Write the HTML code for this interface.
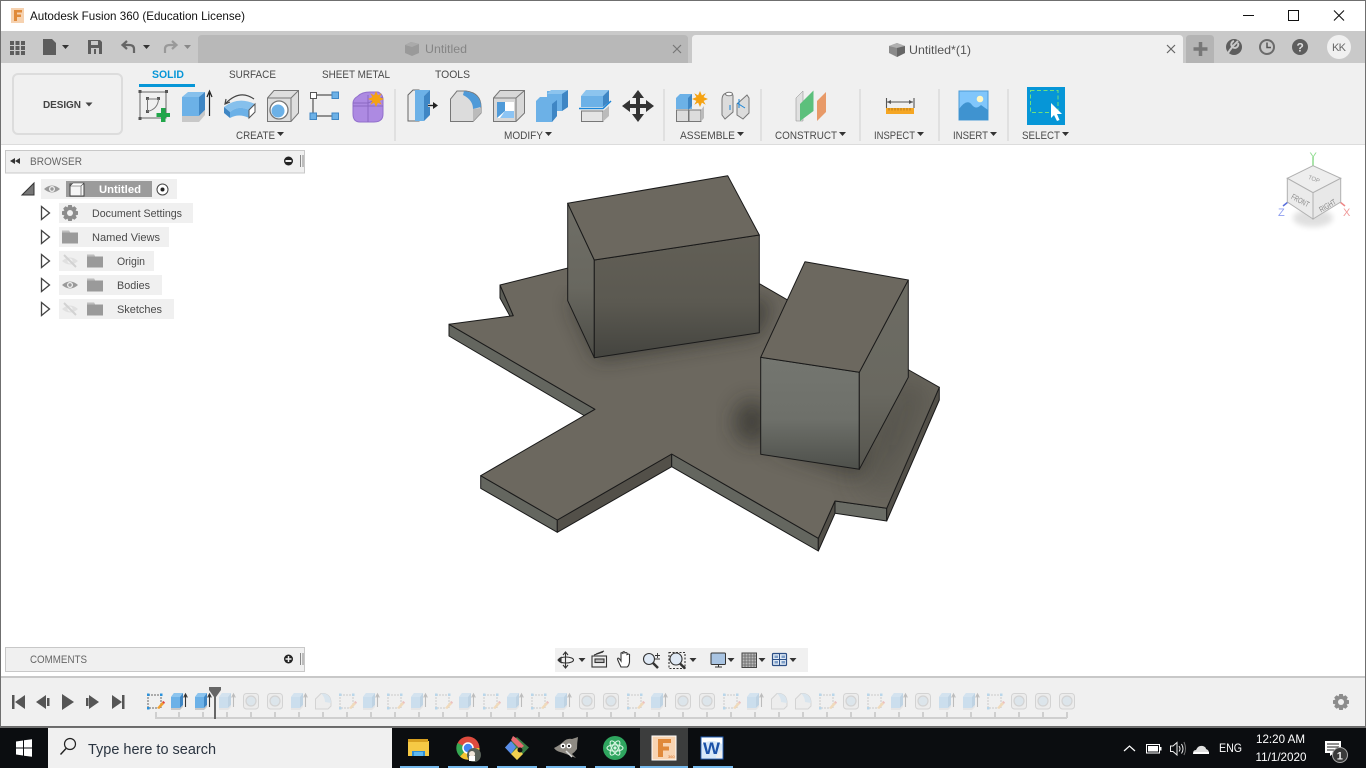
<!DOCTYPE html>
<html><head><meta charset="utf-8"><title>Autodesk Fusion 360</title>
<style>
html,body{margin:0;padding:0;width:1366px;height:768px;overflow:hidden;background:#fff}
svg{display:block;position:absolute;left:0;top:0}
text{font-family:"Liberation Sans",sans-serif;font-size:11px;fill:#4a4a4a}
</style></head><body>
<svg width="1366" height="768" viewBox="0 0 1366 768" xmlns="http://www.w3.org/2000/svg">
<defs>
<clipPath id="plateClip"><polygon points="500,285 513.3,315.7 449,324.3 595,409.3 480.7,475.7 557.3,520 671.7,454 818.3,538.3 835,501 886.7,508.3 939.3,387.3 760,284"/></clipPath>
<filter id="b10" x="-50%" y="-50%" width="200%" height="200%"><feGaussianBlur stdDeviation="10"/></filter>
<filter id="b16" x="-50%" y="-50%" width="200%" height="200%"><feGaussianBlur stdDeviation="16"/></filter>
<filter id="b3" x="-50%" y="-50%" width="200%" height="200%"><feGaussianBlur stdDeviation="3"/></filter>
<linearGradient id="g1f" x1="0" y1="0" x2="0" y2="1"><stop offset="0" stop-color="#625f56"/><stop offset=".55" stop-color="#5b5951"/><stop offset="1" stop-color="#44443f"/></linearGradient>
<linearGradient id="g1l" x1="0" y1="0" x2="0" y2="1"><stop offset="0" stop-color="#6f6e66"/><stop offset=".55" stop-color="#68675f"/><stop offset="1" stop-color="#4c4c46"/></linearGradient>
<linearGradient id="g2f" x1="0" y1="0" x2="0" y2="1"><stop offset="0" stop-color="#747670"/><stop offset=".55" stop-color="#6e706a"/><stop offset="1" stop-color="#4e504b"/></linearGradient>
<linearGradient id="g2r" x1="0" y1="0" x2="0" y2="1"><stop offset="0" stop-color="#6d6c63"/><stop offset=".6" stop-color="#696860"/><stop offset="1" stop-color="#56554e"/></linearGradient>
<g id="sk"><rect x="-7" y="695" width="13" height="13" fill="none" stroke="#666" stroke-dasharray="2 1"/><rect x="-8" y="693.5" width="2.5" height="2.5" fill="#2a92dc"/><rect x="5" y="693.5" width="2.5" height="2.5" fill="#2a92dc"/><rect x="-8" y="707" width="2.5" height="2.5" fill="#2a92dc"/><path d="M2 708 L7 702 L9 704 L4 709 Z" fill="#f0a030"/><path d="M7 702 L9 704 L10 702.5 L8.5 701 Z" fill="#e04040"/></g>
<g id="ex"><path d="M-8 697 L-5 693 H4 V705 L1 708 H-8 Z" fill="#6cb1e7"/><path d="M1 697 L4 693 V705 L1 708 Z" fill="#3f86c4"/><path d="M-8 697 L-5 693 H4 L1 697 Z" fill="#8cc4ee"/><path d="M-8 708 H1 L4 705 V707 L1 710 H-8 Z" fill="#c8c8c8"/><path d="M6.5 707 V695 M4.7 697.5 L6.5 694 L8.3 697.5" fill="none" stroke="#333" stroke-width="1.1"/></g>
<g id="ho"><rect x="-7.5" y="693.5" width="15" height="15.5" rx="3" fill="#e2e2e2" stroke="#888"/><circle cx="0" cy="701" r="5" fill="#a8c8e0" stroke="#888" stroke-width="1.2"/><path d="M-3 697 A5 5 0 0 1 4 700 A5 5 0 0 0 -3 697 Z" fill="#fff"/></g>
<g id="fi"><path d="M-7.5 709 V699 L-2 693.5 H1 Q8 695 8 703 V706 L5 709 Z" fill="#e8e8e8" stroke="#888"/><path d="M-2 693.5 H1 Q8 695 8 703 L2 702 Q2 697 -2 693.5 Z" fill="#9cc8ea"/></g>
<path id="caret" d="M0 0 H7 L3.5 4 Z" fill="#444"/>
<path id="cr2" d="M0 0 H7 L3.5 4 Z" fill="#333"/>
<g id="star"><path d="M0 -8 L1.9 -3.6 L5.7 -5.7 L3.6 -1.9 L8 0 L3.6 1.9 L5.7 5.7 L1.9 3.6 L0 8 L-1.9 3.6 L-5.7 5.7 L-3.6 1.9 L-8 0 L-3.6 -1.9 L-5.7 -5.7 L-1.9 -3.6 Z" fill="#f5a211"/></g>
<g id="folder"><path d="M0 1 H7 L8 3 H16 V14 H0 Z" fill="#9a9a9a"/><path d="M0 1 H7 L8 3 H0 Z" fill="#bdbdbd"/></g>
<g id="eye"><path d="M-8 0 Q0 -7 8 0 Q0 7 -8 0 Z" fill="#9a9a9a"/><circle cx="0" cy="0" r="3" fill="#f0f0f0"/><circle cx="0" cy="0" r="1.7" fill="#9a9a9a"/></g>
<g id="eyeoff"><path d="M-8 0 Q0 -7 8 0 Q0 7 -8 0 Z" fill="#e0e0e0"/><circle cx="0" cy="0" r="2.5" fill="#f0f0f0"/><path d="M-6 -6 L6 6" stroke="#d2d2d2" stroke-width="2"/></g>
<path id="tri" d="M0 -6.5 L8 0 L0 6.5 Z" fill="#fff" stroke="#444" stroke-width="1.3"/>
<g id="gear" fill="#8c8c8c"><path d="M-1.8 -8 H1.8 L2.4 -5.6 L4.5 -6.8 L6.8 -4.5 L5.6 -2.4 L8 -1.8 V1.8 L5.6 2.4 L6.8 4.5 L4.5 6.8 L2.4 5.6 L1.8 8 H-1.8 L-2.4 5.6 L-4.5 6.8 L-6.8 4.5 L-5.6 2.4 L-8 1.8 V-1.8 L-5.6 -2.4 L-6.8 -4.5 L-4.5 -6.8 L-2.4 -5.6 Z"/></g>
</defs>

<!-- window -->
<rect x="0" y="0" width="1366" height="768" fill="#fff"/>
<rect x="0" y="31" width="1366" height="32" fill="#c9c9c9"/>
<path d="M198 63 V39 Q198 35 202 35 H684 Q688 35 688 39 V63 Z" fill="#b8b8b8"/>
<path d="M692 63 V39 Q692 35 696 35 H1179 Q1183 35 1183 39 V63 Z" fill="#f0f0f0"/>
<path d="M1186 63 V39 Q1186 35 1190 35 H1210 Q1214 35 1214 39 V63 Z" fill="#b4b4b4"/>
<rect x="0" y="63" width="1366" height="81" fill="#f0f0f0"/>
<rect x="0" y="144" width="1366" height="1" fill="#dcdcdc"/>

<!-- title bar -->
<rect x="11" y="8" width="13" height="15" fill="#f6d2b0"/>
<path d="M14 10 H22 V12.5 H17 V14.500 H21 V17 H17 V21 H14 Z" fill="#e08a3a"/>
<text x="30" y="20" style="font-size:12px;fill:#111" textLength="215" lengthAdjust="spacingAndGlyphs">Autodesk Fusion 360 (Education License)</text>
<rect x="1243" y="15" width="11" height="1" fill="#111"/>
<rect x="1288.5" y="10.5" width="10" height="10" fill="none" stroke="#111"/>
<path d="M1334 10.5 L1344 20.5 M1344 10.5 L1334 20.5" stroke="#111" stroke-width="1.1"/>

<!-- quick access toolbar -->
<g fill="#5d5d5d">
<rect x="10" y="41" width="4" height="4"/><rect x="15.500" y="41" width="4" height="4"/><rect x="21" y="41" width="4" height="4"/>
<rect x="10" y="46" width="4" height="4"/><rect x="15.500" y="46" width="4" height="4"/><rect x="21" y="46" width="4" height="4"/>
<rect x="10" y="51" width="4" height="4"/><rect x="15.500" y="51" width="4" height="4"/><rect x="21" y="51" width="4" height="4"/>
<path d="M43 39 H52 L56 43 V55 H43 Z"/>
<path d="M88 40 H100 L102 42 V54 H88 Z"/>
</g>
<rect x="91" y="41" width="7" height="4" fill="#c9c9c9"/><rect x="91" y="48" width="8" height="6" fill="#c9c9c9"/><rect x="94" y="49" width="2" height="5" fill="#5d5d5d"/>
<use href="#cr2" x="62" y="45"/>
<path d="M134 53 V49 Q134 45 129 45 H123 M127 41 L122.500 45 L127 49" fill="none" stroke="#666" stroke-width="2.2"/>
<use href="#cr2" x="143" y="45"/>
<path d="M165 53 V49 Q165 45 170 45 H176 M172 41 L176.500 45 L172 49" fill="none" stroke="#999" stroke-width="2.2"/>
<path d="M184 45 H191 L187.500 49 Z" fill="#888"/>

<!-- tabs -->
<path d="M405 45 L411 42 L419 44 V53 L412 56 L405 53 Z" fill="#9a9a9a"/><path d="M405 45 L412 47 L419 44 L411 42 Z" fill="#aaa"/>
<text x="425" y="53" style="font-size:12px;fill:#858585" textLength="42" lengthAdjust="spacingAndGlyphs">Untitled</text>
<path d="M673 45 L681 53 M681 45 L673 53" stroke="#777" stroke-width="1.200"/>
<path d="M889 46 L897 43 L905 46 V53 L897 57 L889 53 Z" fill="#8a8a8a"/><path d="M889 46 L897 48 L905 46 L897 43 Z" fill="#b0b0b0"/><path d="M897 48 L905 46 V53 L897 57 Z" fill="#666"/>
<text x="909" y="54" style="font-size:12px;fill:#555" textLength="62" lengthAdjust="spacingAndGlyphs">Untitled*(1)</text>
<path d="M1167 45 L1175 53 M1175 45 L1167 53" stroke="#666" stroke-width="1.200"/>
<path d="M1200.500 42 V56 M1193.500 49 H1207.500" stroke="#777" stroke-width="3.500"/>

<!-- right icons -->
<circle cx="1234" cy="47" r="8" fill="#5d5d5d"/><path d="M1238 41 L1233 46 L1230 50 L1228 53 M1238 43 a3.500 3.500 0 1 1 -4 -2" fill="none" stroke="#c9c9c9" stroke-width="2"/>
<circle cx="1267" cy="47" r="8" fill="#6a6a6a"/><circle cx="1267" cy="47" r="6" fill="#c9c9c9"/><path d="M1267 42.500 V47.500 H1271" fill="none" stroke="#555" stroke-width="1.500"/>
<circle cx="1300" cy="47" r="8" fill="#5d5d5d"/><text x="1296.500" y="51.500" style="font-size:12px;font-weight:bold;fill:#ddd">?</text>
<circle cx="1339" cy="47" r="12" fill="#f0f0f0"/><text x="1332" y="51" style="font-size:11px;fill:#666" textLength="14">KK</text>

<!-- design button -->
<rect x="13" y="74" width="109" height="60" rx="5" fill="#f0f0f0" stroke="#dcdcdc" stroke-width="2"/>
<text x="43" y="108" style="font-size:10px;font-weight:bold;fill:#444" textLength="38">DESIGN</text>
<use href="#caret" x="85.500" y="102.500"/>

<!-- ribbon tabs -->
<text x="152" y="78" style="font-size:11px;font-weight:bold;fill:#0696d7" textLength="32" lengthAdjust="spacingAndGlyphs">SOLID</text>
<rect x="139" y="84" width="56" height="3" fill="#0696d7"/>
<text x="229" y="78" textLength="47" lengthAdjust="spacingAndGlyphs">SURFACE</text>
<text x="322" y="78" textLength="68" lengthAdjust="spacingAndGlyphs">SHEET METAL</text>
<text x="435" y="78" textLength="35" lengthAdjust="spacingAndGlyphs">TOOLS</text>

<!-- ribbon labels -->
<text x="236" y="139" textLength="39" lengthAdjust="spacingAndGlyphs">CREATE</text><use href="#cr2" x="277" y="132"/>
<text x="504" y="139" textLength="39" lengthAdjust="spacingAndGlyphs">MODIFY</text><use href="#cr2" x="545" y="132"/>
<text x="680" y="139" textLength="55" lengthAdjust="spacingAndGlyphs">ASSEMBLE</text><use href="#cr2" x="737" y="132"/>
<text x="775" y="139" textLength="62" lengthAdjust="spacingAndGlyphs">CONSTRUCT</text><use href="#cr2" x="839" y="132"/>
<text x="874" y="139" textLength="41" lengthAdjust="spacingAndGlyphs">INSPECT</text><use href="#cr2" x="917" y="132"/>
<text x="953" y="139" textLength="35" lengthAdjust="spacingAndGlyphs">INSERT</text><use href="#cr2" x="990" y="132"/>
<text x="1022" y="139" textLength="38" lengthAdjust="spacingAndGlyphs">SELECT</text><use href="#cr2" x="1062" y="132"/>

<!-- separators -->
<g fill="#e0e0e0"><rect x="394" y="89" width="2" height="52"/><rect x="663" y="89" width="2" height="52"/><rect x="760" y="89" width="2" height="52"/><rect x="859" y="89" width="2" height="52"/><rect x="938" y="89" width="2" height="52"/><rect x="1007" y="89" width="2" height="52"/></g>

<!-- sketch -->
<rect x="140" y="92" width="26" height="26" fill="none" stroke="#666"/>
<g fill="#555"><rect x="138.500" y="90" width="3" height="3"/><rect x="165" y="90" width="3" height="3"/><rect x="138.500" y="117" width="3" height="3"/><rect x="146" y="97" width="3" height="3"/><rect x="157" y="97" width="3" height="3"/><rect x="146" y="110" width="3" height="3"/></g>
<path d="M147.500 99 H158 M147.500 99 V111 M158.500 99 Q158 109 147.500 111.500" fill="none" stroke="#777"/>
<path d="M161 108 H165.500 V113 H170 V117 H165.500 V122 H161 V117 H156.500 V113 H161 Z" fill="#21a64a"/>

<!-- extrude -->
<path d="M182 97 H199 V116 H182 Z" fill="#6cb1e7"/><path d="M182 97 L188 92 H205 L199 97 Z" fill="#86c0ec"/><path d="M199 97 L205 92 V110 L199 116 Z" fill="#3f86c4"/>
<path d="M182 116 H199 L205 110 V115 L199 122 H182 Z" fill="#c8c8c8"/>
<path d="M209.500 116 V93 M207 97 L209.500 91 L212 97" fill="none" stroke="#222" stroke-width="1.200"/>

<!-- revolve -->
<path d="M226 103 Q240 89 254 99 M226 99 L225 104 L230 102" fill="none" stroke="#444" stroke-width="1.200"/>
<path d="M224 107 Q238 96 255 104 L249 110 Q238 105 230 112 Z" fill="#86c0ec"/>
<path d="M224 107 L230 112 V118 L224 113 Z" fill="#3f86c4"/>
<path d="M230 112 Q238 105 249 110 V118 Q239 113 230 118 Z" fill="#6cb1e7"/>
<path d="M249 110 L255 104 V112 L249 118 Z" fill="#fff" stroke="#555"/>

<!-- hole -->
<path d="M267.500 98 L274 90.500 H298.500 V113 L291 121.500 H267.500 Z" fill="#dedede" stroke="#777"/>
<path d="M267.500 98 H291 V121.500 M291 98 L298.500 90.500" fill="none" stroke="#777"/>
<circle cx="279" cy="110" r="9" fill="#fff" stroke="#777" stroke-width="1.300"/><circle cx="278" cy="111" r="6.500" fill="#6cb1e7"/>

<!-- pattern-like -->
<path d="M316 95 H332 M313 98 V113 M316 116 H332" stroke="#555" stroke-width="1.200"/>
<rect x="310.500" y="92.500" width="6" height="6" fill="#fff" stroke="#555"/>
<rect x="332" y="92" width="6.500" height="6.500" fill="#6cb1e7" stroke="#3f86c4"/><rect x="310" y="113" width="6.500" height="6.500" fill="#6cb1e7" stroke="#3f86c4"/><rect x="332" y="113" width="6.500" height="6.500" fill="#6cb1e7" stroke="#3f86c4"/>

<!-- form -->
<path d="M358 96 Q362 92 370 92 H378 Q383 94 383 100 V114 Q383 122 374 122 H360 Q353 122 353 114 V103 Q353 99 358 96 Z" fill="#ad8ae2" stroke="#9270cc"/>
<path d="M353 106 H383 M368 95 V122 M353 103 L368 103 L383 97" fill="none" stroke="#8a68c2"/>
<use href="#star" x="376" y="99"/>

<!-- press pull -->
<path d="M408 95 L413 90 H419 V121 H408 Z" fill="#ececec" stroke="#666"/>
<path d="M415 90 H430 L424 96 V121 H415 Z" fill="#6cb1e7"/><path d="M424 96 L430 90 V115 L424 121 Z" fill="#3f86c4"/>
<path d="M428 105.500 H435" stroke="#fff" stroke-width="3"/><path d="M428 105.500 H434" stroke="#222" stroke-width="1.500"/><path d="M433 102 L438 105.500 L433 109 Z" fill="#222"/>

<!-- fillet -->
<path d="M450.500 121.500 V99 L457 91 H466 Q481 93 481 107 V113 L473 121.500 Z" fill="#dcdcdc" stroke="#777"/>
<path d="M464 91 Q481 93 481 107 L473 109 Q473 100 463 95 Z" fill="#4f9ad8"/>
<path d="M481 108 V113 L473 121.500 V109 Z" fill="#bbb"/>

<!-- shell -->
<path d="M493.500 98 L500 90.500 H524.500 V113 L516 121.500 H493.500 Z" fill="#d8d8d8" stroke="#777"/>
<path d="M493.500 98 H516 V121.500 M516 98 L524.500 90.500" fill="none" stroke="#777"/>
<rect x="497" y="102" width="17" height="16" fill="#fff"/><path d="M497 102 H505 V111 L497 118 Z" fill="#4f9ad8"/><path d="M505 111 H514 V118 H500 Z" fill="#8cc4f4"/>

<!-- combine -->
<path d="M536 101 L540 97 H547 V91 H568 V107 L562 111 H557 V116 L552 122 H536 Z" fill="#6cb1e7"/>
<path d="M547 94 L551 90 H568 L562 94 Z" fill="#8cc4ee"/><path d="M562 94 L568 90 V107 L562 111 Z" fill="#3f86c4"/><path d="M552 104 L557 100 V116 L552 122 Z" fill="#3f86c4"/>

<!-- split -->
<path d="M581 96 L586 90 H609 L603 96 Z" fill="#8cc4ee"/><rect x="581" y="96" width="22" height="11" fill="#6cb1e7"/><path d="M603 96 L609 90 V102 L603 107 Z" fill="#3f86c4"/>
<path d="M579 108.500 H603 L611 101" fill="none" stroke="#1985d8" stroke-width="1.500"/>
<path d="M581.500 111 H603 V121.500 H581.500 Z" fill="#e4e4e4" stroke="#777"/><path d="M603 111 L609 106 V116 L603 121.500 Z" fill="#bbb"/>

<!-- move -->
<path d="M638 90 L644 98 H640 V104 H646 V100 L654 106 L646 112 V108 H640 V114 H644 L638 122 L632 114 H636 V108 H630 V112 L622 106 L630 100 V104 H636 V98 H632 Z" fill="#333"/>

<!-- assemble 1 -->
<path d="M676 98 L680 94 H692 V109 H676 Z" fill="#6cb1e7"/><path d="M688 98 L692 94 V106 L688 110 Z" fill="#3f86c4"/>
<rect x="676.500" y="110" width="12" height="11.500" fill="#dcdcdc" stroke="#777"/><rect x="689" y="110" width="12" height="11.500" fill="#dcdcdc" stroke="#777"/><path d="M701 110 L704 106 V118 L701 121.500 Z" fill="#bbb"/>
<use href="#star" x="700" y="99"/>

<!-- assemble 2 -->
<path d="M722 100 Q722 93 728 93 Q733 93 733 96 V112 L725 119 L722 115 Z" fill="#dcdcdc" stroke="#777"/><ellipse cx="729" cy="94" rx="3.500" ry="1.800" fill="#fff" stroke="#777"/>
<path d="M737 104 L747 95 L749 98 V113 L743 119 L737 115 Z" fill="#dcdcdc" stroke="#777"/><path d="M737 103 L745 108 M739 99 V108" stroke="#1985d8" fill="none"/><path d="M730 105 V110" stroke="#1985d8"/>

<!-- construct -->
<path d="M796 98 L803 91 V121 H796 Z" fill="#e0e0e0" stroke="#888" stroke-width=".5"/>
<path d="M800 104 L813.500 90.500 V111 L800 121 Z" fill="#5cc07c"/>
<path d="M817 101 L826 92 V112 L817 121 Z" fill="#e89a68"/>

<!-- inspect -->
<path d="M886.500 98 V108 M914 98 V108 M887 102 H913" stroke="#555" stroke-width="1.100"/><path d="M887 102 L891 100 V104 Z M913 102 L909 100 V104 Z" fill="#555"/>
<rect x="886" y="108" width="28" height="6" fill="#f5a623"/><path d="M889 108 V110.500 M892 108 V110.500 M895 108 V110.500 M898 108 V110.500 M901 108 V110.500 M904 108 V110.500 M907 108 V110.500 M910 108 V110.500" stroke="#a87012" stroke-width=".8"/>

<!-- insert -->
<rect x="959" y="91" width="29" height="29" fill="#80c6fb" stroke="#4d9bd6"/><path d="M959 109 Q967 98 972 105 Q976 110 981 105 L988 110 V120 H959 Z" fill="#3f93d0"/><circle cx="980" cy="99" r="3.300" fill="#fff7c4"/>

<!-- select -->
<rect x="1027" y="87" width="38" height="38" fill="#0696d7"/>
<rect x="1030.500" y="90.500" width="27.500" height="22" fill="none" stroke="#6fe07c" stroke-dasharray="4 2.500"/>
<path d="M1051 103 V118 L1054 115 L1057 121 L1059.500 120 L1057 114 L1062 114 Z" fill="#fff"/>

<!-- browser -->
<rect x="5.500" y="150.500" width="299" height="22.500" fill="#f0f0f0" stroke="#c8c8c8"/>
<path d="M10 161 L15 158 V164 Z M15 161 L20 158 V164 Z" fill="#333"/>
<text x="30" y="165" style="fill:#666" textLength="52" lengthAdjust="spacingAndGlyphs">BROWSER</text>
<circle cx="288.500" cy="161" r="4.500" fill="#222"/><rect x="285.500" y="160" width="6" height="2" fill="#eee"/>
<path d="M300.500 155 V167 M303 155 V167" stroke="#888"/>

<rect x="41" y="179" width="136" height="20" fill="#f0f0f0"/>
<path d="M22 195 L34 183 V195 Z" fill="#777" stroke="#333"/>
<use href="#eye" x="52" y="189"/>
<rect x="66" y="181" width="86" height="16" fill="#9b9b9b"/>
<path d="M70 184 H84 V196 H70 Z" fill="#f5f5f5" stroke="#444"/><path d="M70 186 L73 183 H84 L81 186 Z" fill="#fff" stroke="#444" stroke-width=".6"/><path d="M81 186 V196" stroke="#888"/>
<text x="99" y="193" style="font-weight:bold;fill:#fff" textLength="42" lengthAdjust="spacingAndGlyphs">Untitled</text>
<circle cx="162.500" cy="189.500" r="5.500" fill="#fff" stroke="#444"/><circle cx="162.500" cy="189.500" r="2" fill="#222"/>

<rect x="59" y="203" width="134" height="20" fill="#f0f0f0"/>
<rect x="59" y="227" width="110" height="20" fill="#f0f0f0"/>
<rect x="59" y="251" width="95" height="20" fill="#f0f0f0"/>
<rect x="59" y="275" width="103" height="20" fill="#f0f0f0"/>
<rect x="59" y="299" width="115" height="20" fill="#f0f0f0"/>
<use href="#tri" x="41.500" y="213"/><use href="#tri" x="41.500" y="237"/><use href="#tri" x="41.500" y="261"/><use href="#tri" x="41.500" y="285"/><use href="#tri" x="41.500" y="309"/>
<use href="#gear" x="70" y="213"/><circle cx="70" cy="213" r="3" fill="#f0f0f0"/>
<use href="#folder" x="62" y="229.500"/>
<use href="#eyeoff" x="70" y="261"/><use href="#folder" x="87" y="253.500"/>
<use href="#eye" x="70" y="285"/><use href="#folder" x="87" y="277.500"/>
<use href="#eyeoff" x="70" y="309"/><use href="#folder" x="87" y="301.500"/>
<text x="92" y="217" textLength="90" lengthAdjust="spacingAndGlyphs">Document Settings</text>
<text x="92" y="241" textLength="68" lengthAdjust="spacingAndGlyphs">Named Views</text>
<text x="117" y="265" textLength="28" lengthAdjust="spacingAndGlyphs">Origin</text>
<text x="117" y="289" textLength="33" lengthAdjust="spacingAndGlyphs">Bodies</text>
<text x="117" y="313" textLength="45" lengthAdjust="spacingAndGlyphs">Sketches</text>

<!-- comments -->
<rect x="5.500" y="647.500" width="299" height="24" fill="#f0f0f0" stroke="#c8c8c8"/>
<text x="30" y="663" style="fill:#666" textLength="57" lengthAdjust="spacingAndGlyphs">COMMENTS</text>
<circle cx="288.500" cy="659" r="4.500" fill="#222"/><path d="M285.500 659 H291.500 M288.500 656 V662" stroke="#eee" stroke-width="1.500"/>
<path d="M300.500 653 V665 M303 653 V665" stroke="#888"/>

<!-- model: plate -->
<g stroke="#1a1a1a" stroke-width="1" stroke-linejoin="round">
<polygon points="449,324.300 595,409.300 584,415.500 449,336" fill="#64665f"/>
<polygon points="500,285 513.300,315.700 510,316.200 500,298" fill="#5c5d56"/>
<polygon points="480.700,475.700 557.300,520 557.300,532.300 480.700,488.300" fill="#64665f"/>
<polygon points="557.300,520 671.700,454 671.700,466.700 557.300,532.300" fill="#535049"/>
<polygon points="671.700,454 818.300,538.300 818.300,551 671.700,466.700" fill="#64665f"/>
<polygon points="818.300,538.300 835,501 835,513.300 818.300,551" fill="#535049"/>
<polygon points="835,501 886.700,508.300 886.700,521 835,513.300" fill="#6a6c65"/>
<polygon points="886.700,508.300 939.300,387.300 939.300,400 886.700,521" fill="#535049"/>
<polygon points="500,285 513.300,315.700 449,324.300 595,409.300 480.700,475.700 557.300,520 671.700,454 818.300,538.300 835,501 886.700,508.300 939.300,387.300 900,365 760,284 600,260" fill="#6c685f"/>
</g>
<g clip-path="url(#plateClip)">
<ellipse cx="752" cy="422" rx="18" ry="22" fill="#2a2a26" filter="url(#b10)" opacity=".62"/>
<path d="M760 445 L860 478 L908 378 L884 445 Z" fill="#2c2c28" filter="url(#b10)" opacity=".55"/>
<path d="M570 300 L597 360 L760 334 L772 300 Z" fill="#2c2c28" filter="url(#b10)" opacity=".65"/>
<path d="M900 370 L940 390 L890 500 L860 480 Z" fill="#4a4842" filter="url(#b16)" opacity=".5"/>
</g>
<g stroke="#1a1a1a" stroke-width="1" stroke-linejoin="round">
<!-- box 1 -->
<polygon points="567.700,203.300 594.300,260 594.300,357.700 567.700,300.700" fill="url(#g1l)"/>
<polygon points="594.300,260 759.300,235 759.300,332.700 594.300,357.700" fill="url(#g1f)"/>
<polygon points="567.700,203.300 727.700,175.700 759.300,235 594.300,260" fill="#6c685f"/>
<!-- box 2 -->
<polygon points="760.700,357.300 859.300,372.300 859.300,469.300 760.700,454.300" fill="url(#g2f)"/>
<polygon points="859.300,372.300 908.300,280 908.300,377.300 859.300,469.300" fill="url(#g2r)"/>
<polygon points="805,261.700 908.300,280 859.300,372.300 760.700,357.300" fill="#6c685f"/>
</g>

<!-- viewcube -->
<ellipse cx="1313" cy="218" rx="20" ry="9" fill="#000" opacity=".12" filter="url(#b3)"/>
<path d="M1313 166 V157" stroke="#8fdc8f" stroke-width="1.500"/><path d="M1288 202 L1283 206" stroke="#5a6fdc" stroke-width="1.500"/><path d="M1340 202 L1345 206" stroke="#e88" stroke-width="1.500"/>
<polygon points="1287.300,178.300 1313,165.700 1340.700,178.300 1313,192.700" fill="#eeeeee" stroke="#b0b0b0"/>
<polygon points="1287.300,178.300 1313,192.700 1313,219 1287.300,202" fill="#ebebeb" stroke="#b0b0b0"/>
<polygon points="1340.700,178.300 1313,192.700 1313,219 1340.700,202" fill="#e8e8e8" stroke="#b0b0b0"/>
<text x="1308" y="181" transform="rotate(22 1314 179)" style="font-size:6px;fill:#999" textLength="12" lengthAdjust="spacingAndGlyphs">TOP</text>
<text x="1291" y="203" transform="rotate(28 1300 200)" style="font-size:8px;fill:#888" textLength="19" lengthAdjust="spacingAndGlyphs">FRONT</text>
<text x="1318" y="209" transform="rotate(-30 1326 205)" style="font-size:8px;fill:#888" textLength="18" lengthAdjust="spacingAndGlyphs">RIGHT</text>
<text x="1309.500" y="160" style="font-size:11px;fill:#90dc90">Y</text>
<text x="1278" y="216" style="font-size:11px;fill:#8f9ff0">Z</text>
<text x="1343" y="216" style="font-size:11px;fill:#f09a9a">X</text>

<!-- nav bar -->
<rect x="555" y="648" width="253" height="24" fill="#f0f0f0"/>
<g fill="none" stroke="#333" stroke-width="1.100">
<path d="M565.500 652 V668 M563 655 L565.500 652 L568 655 M563 665 L565.500 668 L568 665"/><ellipse cx="566" cy="660" rx="7.500" ry="3"/><path d="M558 660 L561 657.500 V662.500 Z" fill="#333"/>
<rect x="592" y="656" width="14.500" height="11"/><rect x="595" y="659" width="9" height="3.500" fill="#bbb"/><path d="M594 655 L603 652 M596 654 L604 651"/>
<path d="M621 667 Q618 661 617.500 659 Q618 657 620 659.500 L621 661 V653 Q622.500 652 623 654 V652 Q624.500 651 625 653 L626 652.500 Q627.500 652.500 627 654.500 L628.500 654 Q630 654 629.500 656 V662 Q629 666 627 667 Z" fill="#fff"/>
<circle cx="649" cy="659" r="5.500" fill="#dfe9f5"/><path d="M653 663 L658 668" stroke-width="2.500"/><path d="M655 655.500 H660 M657.500 653 V658 M655 659 H660" stroke-width=".9"/>
<rect x="669" y="652.500" width="16" height="16" stroke-dasharray="2 1.500"/><circle cx="676" cy="659" r="6" fill="#dfe9f5"/><path d="M680 663.500 L685 668.500" stroke-width="2.500"/>
</g>
<rect x="711" y="653" width="14.500" height="11.500" rx="1" fill="#a9c4e2" stroke="#333"/><path d="M715 667 H722 M718.500 664.500 V667" stroke="#333"/>
<rect x="742" y="653" width="14.500" height="14.500" fill="#bbb" stroke="#444"/><path d="M745 653 V667 M748 653 V667 M751 653 V667 M754 653 V667 M742 656 H756 M742 659 H756 M742 662 H756 M742 665 H756" stroke="#666" stroke-width=".8"/>
<rect x="772.500" y="653.500" width="14" height="12" rx="1" fill="#dfe9f5" stroke="#2c4f86" stroke-width="1.200"/><path d="M779.500 653 V665.500 M772.500 659.500 H786.500" stroke="#2c4f86"/><rect x="774.500" y="655.500" width="3.500" height="2.500" fill="#7d9ec8"/><rect x="781.500" y="655.500" width="3.500" height="2.500" fill="#7d9ec8"/><rect x="774.500" y="661" width="3.500" height="2.500" fill="#7d9ec8"/><rect x="781.500" y="661" width="3.500" height="2.500" fill="#7d9ec8"/>
<use href="#cr2" x="578.500" y="658"/><use href="#cr2" x="689.500" y="658"/><use href="#cr2" x="727.500" y="658"/><use href="#cr2" x="758.500" y="658"/><use href="#cr2" x="789.500" y="658"/>

<!-- timeline -->
<rect x="0" y="676" width="1366" height="2" fill="#c8c8c8"/>
<rect x="0" y="678" width="1366" height="48" fill="#f0f0f0"/>
<rect x="0" y="726" width="1366" height="2" fill="#6a6a6a"/>
<g fill="#555">
<rect x="12" y="695" width="2.500" height="14"/><path d="M25 695 V709 L15 702 Z"/>
<path d="M46 695 V709 L36 702 Z"/><rect x="47" y="698" width="2.500" height="8"/>
<path d="M62 694 L74 702 L62 710 Z"/>
<rect x="86" y="698" width="2.500" height="8"/><path d="M89 695 L99 702 L89 709 Z"/>
<path d="M112 695 L122 702 L112 709 Z"/><rect x="122" y="695" width="2.500" height="14"/>
</g>
<rect x="155" y="717" width="912" height="2" fill="#cfcfcf"/>
<g fill="#cfcfcf">
<rect x="155" y="712" width="2" height="6"/><rect x="178" y="712" width="2" height="6"/><rect x="202" y="712" width="2" height="6"/><rect x="226" y="712" width="2" height="6"/><rect x="250" y="712" width="2" height="6"/><rect x="274" y="712" width="2" height="6"/><rect x="298" y="712" width="2" height="6"/><rect x="322" y="712" width="2" height="6"/><rect x="346" y="712" width="2" height="6"/><rect x="370" y="712" width="2" height="6"/><rect x="394" y="712" width="2" height="6"/><rect x="418" y="712" width="2" height="6"/><rect x="442" y="712" width="2" height="6"/><rect x="466" y="712" width="2" height="6"/><rect x="490" y="712" width="2" height="6"/><rect x="514" y="712" width="2" height="6"/><rect x="538" y="712" width="2" height="6"/><rect x="562" y="712" width="2" height="6"/><rect x="586" y="712" width="2" height="6"/><rect x="610" y="712" width="2" height="6"/><rect x="634" y="712" width="2" height="6"/><rect x="658" y="712" width="2" height="6"/><rect x="682" y="712" width="2" height="6"/><rect x="706" y="712" width="2" height="6"/><rect x="730" y="712" width="2" height="6"/><rect x="754" y="712" width="2" height="6"/><rect x="778" y="712" width="2" height="6"/><rect x="802" y="712" width="2" height="6"/><rect x="826" y="712" width="2" height="6"/><rect x="850" y="712" width="2" height="6"/><rect x="874" y="712" width="2" height="6"/><rect x="898" y="712" width="2" height="6"/><rect x="922" y="712" width="2" height="6"/><rect x="946" y="712" width="2" height="6"/><rect x="970" y="712" width="2" height="6"/><rect x="994" y="712" width="2" height="6"/><rect x="1018" y="712" width="2" height="6"/><rect x="1042" y="712" width="2" height="6"/><rect x="1066" y="712" width="2" height="6"/>
</g>
<use href="#sk" x="155"/><use href="#ex" x="179"/><use href="#ex" x="203"/>
<g opacity=".27">
<use href="#ex" x="227"/><use href="#ho" x="251"/><use href="#ho" x="275"/><use href="#ex" x="299"/><use href="#fi" x="323"/><use href="#sk" x="347"/><use href="#ex" x="371"/><use href="#sk" x="395"/><use href="#ex" x="419"/><use href="#sk" x="443"/><use href="#ex" x="467"/><use href="#sk" x="491"/><use href="#ex" x="515"/><use href="#sk" x="539"/><use href="#ex" x="563"/><use href="#ho" x="587"/><use href="#ho" x="611"/><use href="#sk" x="635"/><use href="#ex" x="659"/><use href="#ho" x="683"/><use href="#ho" x="707"/><use href="#sk" x="731"/><use href="#ex" x="755"/><use href="#fi" x="779"/><use href="#fi" x="803"/><use href="#sk" x="827"/><use href="#ho" x="851"/><use href="#sk" x="875"/><use href="#ex" x="899"/><use href="#ho" x="923"/><use href="#ex" x="947"/><use href="#ex" x="971"/><use href="#sk" x="995"/><use href="#ho" x="1019"/><use href="#ho" x="1043"/><use href="#ho" x="1067"/>
</g>
<path d="M209 687 H221 V690 L216 697 V719 H214 V697 L209 690 Z" fill="#666"/>
<use href="#gear" x="1341" y="702"/><circle cx="1341" cy="702" r="3" fill="#f0f0f0"/>

<!-- frame -->
<rect x="0.500" y="0.500" width="1365" height="727" fill="none" stroke="#6f6f6f"/>

<!-- taskbar -->
<rect x="0" y="728" width="1366" height="40" fill="#0b0d10"/>
<path d="M16 741.500 L23 740.500 V747.500 H16 Z M24 740.300 L32 739.200 V747.500 H24 Z M16 748.500 H23 V755.500 L16 754.500 Z M24 748.500 H32 V756.800 L24 755.700 Z" fill="#fff"/>
<rect x="48" y="728" width="344" height="40" fill="#f0f0f0"/>
<circle cx="70" cy="744" r="5.500" fill="none" stroke="#222" stroke-width="1.200"/><path d="M66 748.500 L60.500 754.500" stroke="#222" stroke-width="1.400"/>
<text x="88" y="754" style="font-size:15px;fill:#2a3440" textLength="128" lengthAdjust="spacingAndGlyphs">Type here to search</text>
<g fill="#76b9ed"><rect x="400" y="766" width="39" height="2"/><rect x="448" y="766" width="40" height="2"/><rect x="497" y="766" width="40" height="2"/><rect x="546" y="766" width="40" height="2"/><rect x="595" y="766" width="40" height="2"/><rect x="693" y="766" width="40" height="2"/></g>
<rect x="640" y="728" width="48" height="40" fill="#3c3d3d"/><rect x="640" y="766" width="48" height="2" fill="#76b9ed"/>

<!-- explorer -->
<path d="M408 739 H417 L419 741 H429 V756 H408 Z" fill="#f6c945"/><rect x="408" y="739" width="20" height="3" fill="#d8a020"/><path d="M412 756 V751 H425 V756 H422 V753 H415 V756 Z" fill="#2e8fd8"/><rect x="414" y="752" width="9" height="4" fill="#5fb8f0"/>
<!-- chrome -->
<circle cx="468" cy="748" r="11.500" fill="#de4b3e"/><path d="M468 748 L479.500 748 A11.500 11.500 0 0 1 460 756.500 Z" fill="#f5c430"/><path d="M468 748 L460 756.500 A11.500 11.500 0 0 1 457.500 743 Z" fill="#35a853"/><circle cx="468" cy="748" r="5" fill="#4285f4" stroke="#fff" stroke-width="1.500"/><circle cx="474" cy="755" r="7" fill="#586058"/><circle cx="472" cy="754" r="3" fill="#f0e6da"/><rect x="469" y="756" width="6" height="5" fill="#fff"/>
<!-- kraken -->
<path d="M517 737 L529 747.500 L517 760 L505 747.500 Z" fill="#3a7d44"/><path d="M505 747.500 L511 741 L516 747 L511 754 Z" fill="#5a8de8"/><path d="M511 735 L514 737 L522 745 L518 748 L509 739 Z" fill="#e86a70" transform="translate(2,1)"/><path d="M511 754 L517 748 L523 754 L517 760 Z" fill="#f0d050"/><circle cx="520" cy="750" r="2.500" fill="#111"/>
<!-- gimp -->
<path d="M554 748 Q560 745 563 742 Q567 738 572 739 L578 737 Q577 743 577 749 Q575 752 572 754 L576 758 L571 756 Q564 753 560 752 Q556 751 554 748 Z" fill="#8f8b84"/><circle cx="563" cy="746" r="2.500" fill="#fff"/><circle cx="569" cy="746" r="2.500" fill="#fff"/><circle cx="563" cy="746" r="1.100" fill="#111"/><circle cx="569" cy="746" r="1.100" fill="#111"/><path d="M566 751 L572 757" stroke="#ddd" stroke-width="1.500"/>
<!-- atom -->
<circle cx="615" cy="748" r="12" fill="#2fa55f"/><g fill="none" stroke="#d8f5e2" stroke-width="1.100"><ellipse cx="615" cy="748" rx="8" ry="3.200"/><ellipse cx="615" cy="748" rx="8" ry="3.200" transform="rotate(60 615 748)"/><ellipse cx="615" cy="748" rx="8" ry="3.200" transform="rotate(120 615 748)"/></g><circle cx="615" cy="748" r="1.600" fill="#d8f5e2"/>
<!-- fusion -->
<rect x="652" y="736" width="24" height="24" fill="#f8d4b2"/><rect x="652" y="736" width="24" height="24" fill="none" stroke="#fff"/><path d="M658 739 H671 V743 H663 V746.500 H669 V750.500 H663 V757 H658 Z" fill="#e0893a"/>
<text x="668" y="758" style="font-size:4px;fill:#d9722a">360</text>
<!-- word -->
<rect x="701" y="737" width="22" height="22" fill="#fff" stroke="#1f5cb3"/><path d="M702 744 Q712 738 722 744 V758 H702 Z" fill="#d8e8f8"/><text x="703" y="754" style="font-size:17px;font-weight:bold;fill:#1c52a8" textLength="17" lengthAdjust="spacingAndGlyphs">W</text><path d="M716 756 L722 750 V758 H716 Z" fill="#eee"/>

<!-- tray -->
<path d="M1124 751 L1129.500 746 L1135 751" fill="none" stroke="#fff" stroke-width="1.200"/>
<rect x="1146.500" y="744.500" width="13" height="8.500" fill="none" stroke="#fff"/><rect x="1148" y="746" width="10" height="5.500" fill="#fff"/><rect x="1160" y="747" width="1.500" height="3.500" fill="#fff"/>
<path d="M1170.500 746 H1173 L1177 742.500 V755 L1173 751.500 H1170.500 Z M1179 746 Q1181 749 1179 751.500 M1181.500 744 Q1184.500 749 1181.500 753.500" fill="none" stroke="#eee"/><path d="M1184 742 Q1187 749 1184 755" fill="none" stroke="#777"/>
<path d="M1193 753.500 Q1193 750 1196 750 Q1198 745 1203 746 Q1206 747 1206 749 Q1209 750 1209 753 L1209 754 H1193 Z" fill="#e0e0e0"/><path d="M1193 754 H1209 V752 H1194 Z" fill="#fff"/>
<text x="1219" y="752" style="font-size:12px;fill:#fff" textLength="23" lengthAdjust="spacingAndGlyphs">ENG</text>
<text x="1256" y="743" style="font-size:12px;fill:#fff" textLength="49" lengthAdjust="spacingAndGlyphs">12:20 AM</text>
<text x="1255.500" y="761" style="font-size:12px;fill:#fff" textLength="51" lengthAdjust="spacingAndGlyphs">11/1/2020</text>
<path d="M1325 741 H1341 V753 H1334 L1330 756 V753 H1325 Z" fill="#fff"/><path d="M1327 744 H1339 M1327 747 H1339 M1327 750 H1336" stroke="#222"/>
<circle cx="1340" cy="755" r="7.500" fill="#3a3a3a" stroke="#aaa"/><text x="1336.800" y="759.500" style="font-size:11px;font-weight:bold;fill:#eee">1</text>
</svg>
</body></html>
